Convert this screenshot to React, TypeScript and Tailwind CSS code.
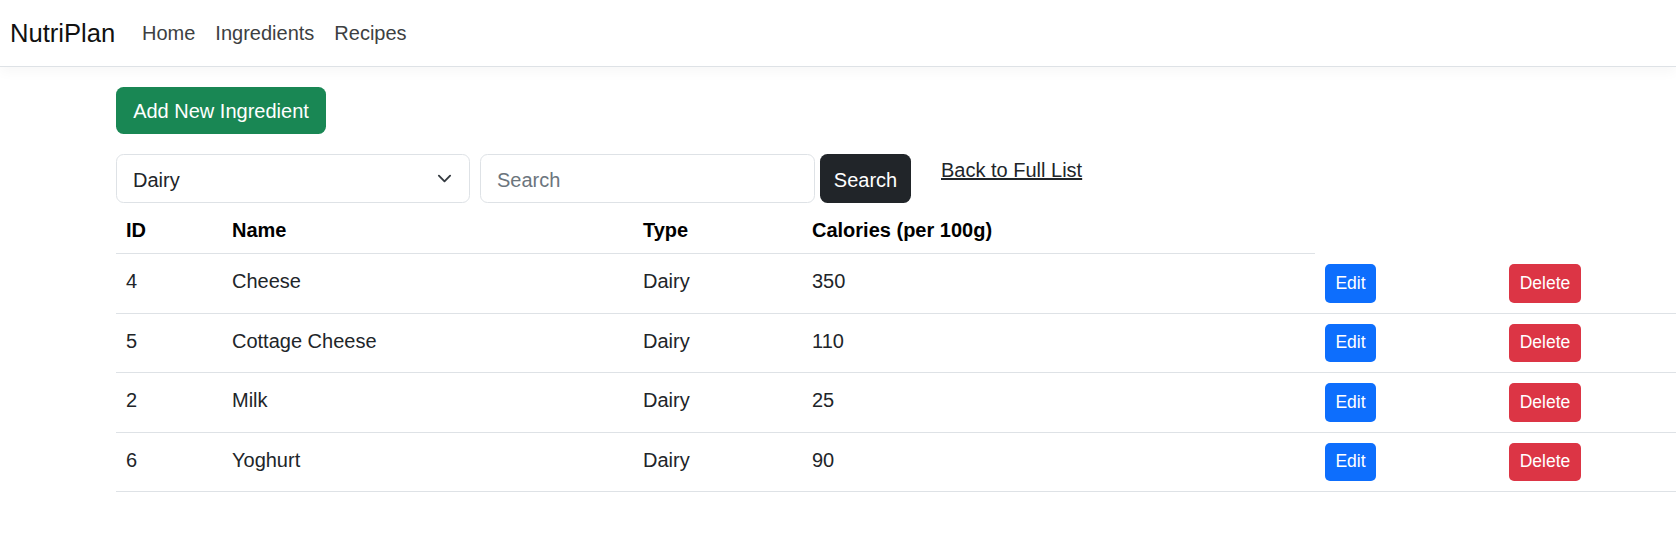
import React from 'react'

const font = { fontFamily: '"Liberation Sans", Arial, sans-serif' }

const ingredients = [
  { id: 4, name: 'Cheese', type: 'Dairy', calories: 350 },
  { id: 5, name: 'Cottage Cheese', type: 'Dairy', calories: 110 },
  { id: 2, name: 'Milk', type: 'Dairy', calories: 25 },
  { id: 6, name: 'Yoghurt', type: 'Dairy', calories: 90 },
]

function Navbar() {
  return (
    <nav className="relative z-10 h-[67px] bg-white border-b border-[#dee2e6] shadow-[0_5px_12px_rgba(0,0,0,0.035)] flex items-center">
      <a href="#" className="w-[132px] pl-[10px] text-[25.6px] leading-[38px] text-[#111] no-underline">
        NutriPlan
      </a>
      <ul className="flex items-center">
        {['Home', 'Ingredients', 'Recipes'].map((label) => (
          <li key={label}>
            <a href="#" className="px-[10px] text-[20px] leading-[30px] text-[#3d3f42]">
              {label}
            </a>
          </li>
        ))}
      </ul>
    </nav>
  )
}

function Filters() {
  return (
    <div className="flex items-start mt-[20px] h-[49px]">
      {/* category select */}
      <div className="w-[354px] h-[49px] flex items-center justify-between border border-[#dee2e6] rounded-[7.5px] pl-[16px] pr-[17.5px] pt-[2px] text-[20px] text-[#212529]">
        <span>Dairy</span>
        <svg width="15" height="15" viewBox="0 0 16 16" fill="none" className="-mt-[2px]">
          <path d="m2 5 6 6 6-6" stroke="#343a40" strokeWidth="2" strokeLinecap="round" strokeLinejoin="round" />
        </svg>
      </div>
      <input
        placeholder="Search"
        className="ml-[10px] w-[335px] h-[49px] border border-[#dee2e6] rounded-[7.5px] px-[16px] pt-[4px] text-[20px] text-[#212529] placeholder:text-[#6c757d] outline-none"
        style={font}
      />
      <button className="ml-[5px] w-[91px] h-[49px] pt-[2px] rounded-[7.5px] bg-[#212529] text-white text-[20px]">
        Search
      </button>
      <a href="#" className="ml-[30px] pt-[1px] text-[20px] leading-[30px] text-[#212529] underline">
        Back to Full List
      </a>
    </div>
  )
}

function IngredientTable() {
  return (
    <table className="table-fixed border-separate border-spacing-0 w-[1560px] text-[20px] text-[#212529]">
      <colgroup>
        <col className="w-[106px]" />
        <col className="w-[411px]" />
        <col className="w-[169px]" />
        <col className="w-[513px]" />
        <col className="w-[184px]" />
        <col className="w-[177px]" />
      </colgroup>
      <thead>
        <tr>
          {['ID', 'Name', 'Type', 'Calories (per 100g)'].map((h) => (
            <th
              key={h}
              className="text-left align-top font-bold text-black px-[10px] pt-[12px] pb-[8px] leading-[30px] border-b border-[#dee2e6]"
            >
              {h}
            </th>
          ))}
        </tr>
      </thead>
      <tbody>
        {ingredients.map((item) => (
          <tr key={item.id}>
            <td className="align-top px-[10px] pt-[12px] pb-[10px] leading-[30px] border-b border-[#dee2e6]">{item.id}</td>
            <td className="align-top px-[10px] pt-[12px] pb-[10px] leading-[30px] border-b border-[#dee2e6]">{item.name}</td>
            <td className="align-top px-[10px] pt-[12px] pb-[10px] leading-[30px] border-b border-[#dee2e6]">{item.type}</td>
            <td className="align-top px-[10px] pt-[12px] pb-[10px] leading-[30px] border-b border-[#dee2e6]">{item.calories}</td>
            <td className="align-top px-[10px] py-[10px] border-b border-[#dee2e6]">
              <button className="w-[51px] h-[38.5px] rounded-[5px] bg-[#0d6efd] text-white text-[17.5px] leading-none">
                Edit
              </button>
            </td>
            <td className="align-top px-[10px] py-[10px] border-b border-[#dee2e6]">
              <button className="w-[72px] h-[38.5px] rounded-[5px] bg-[#dc3545] text-white text-[17.5px] leading-none">
                Delete
              </button>
            </td>
          </tr>
        ))}
      </tbody>
    </table>
  )
}

export default function App() {
  return (
    <div className="min-h-[551px] bg-white" style={font}>
      <Navbar />
      <main className="pl-[116px] pt-[20px]">
        <button className="w-[210px] h-[47px] rounded-[7.5px] bg-[#198754] text-white text-[20px]">
          Add New Ingredient
        </button>
        <Filters />
        <IngredientTable />
      </main>
    </div>
  )
}
